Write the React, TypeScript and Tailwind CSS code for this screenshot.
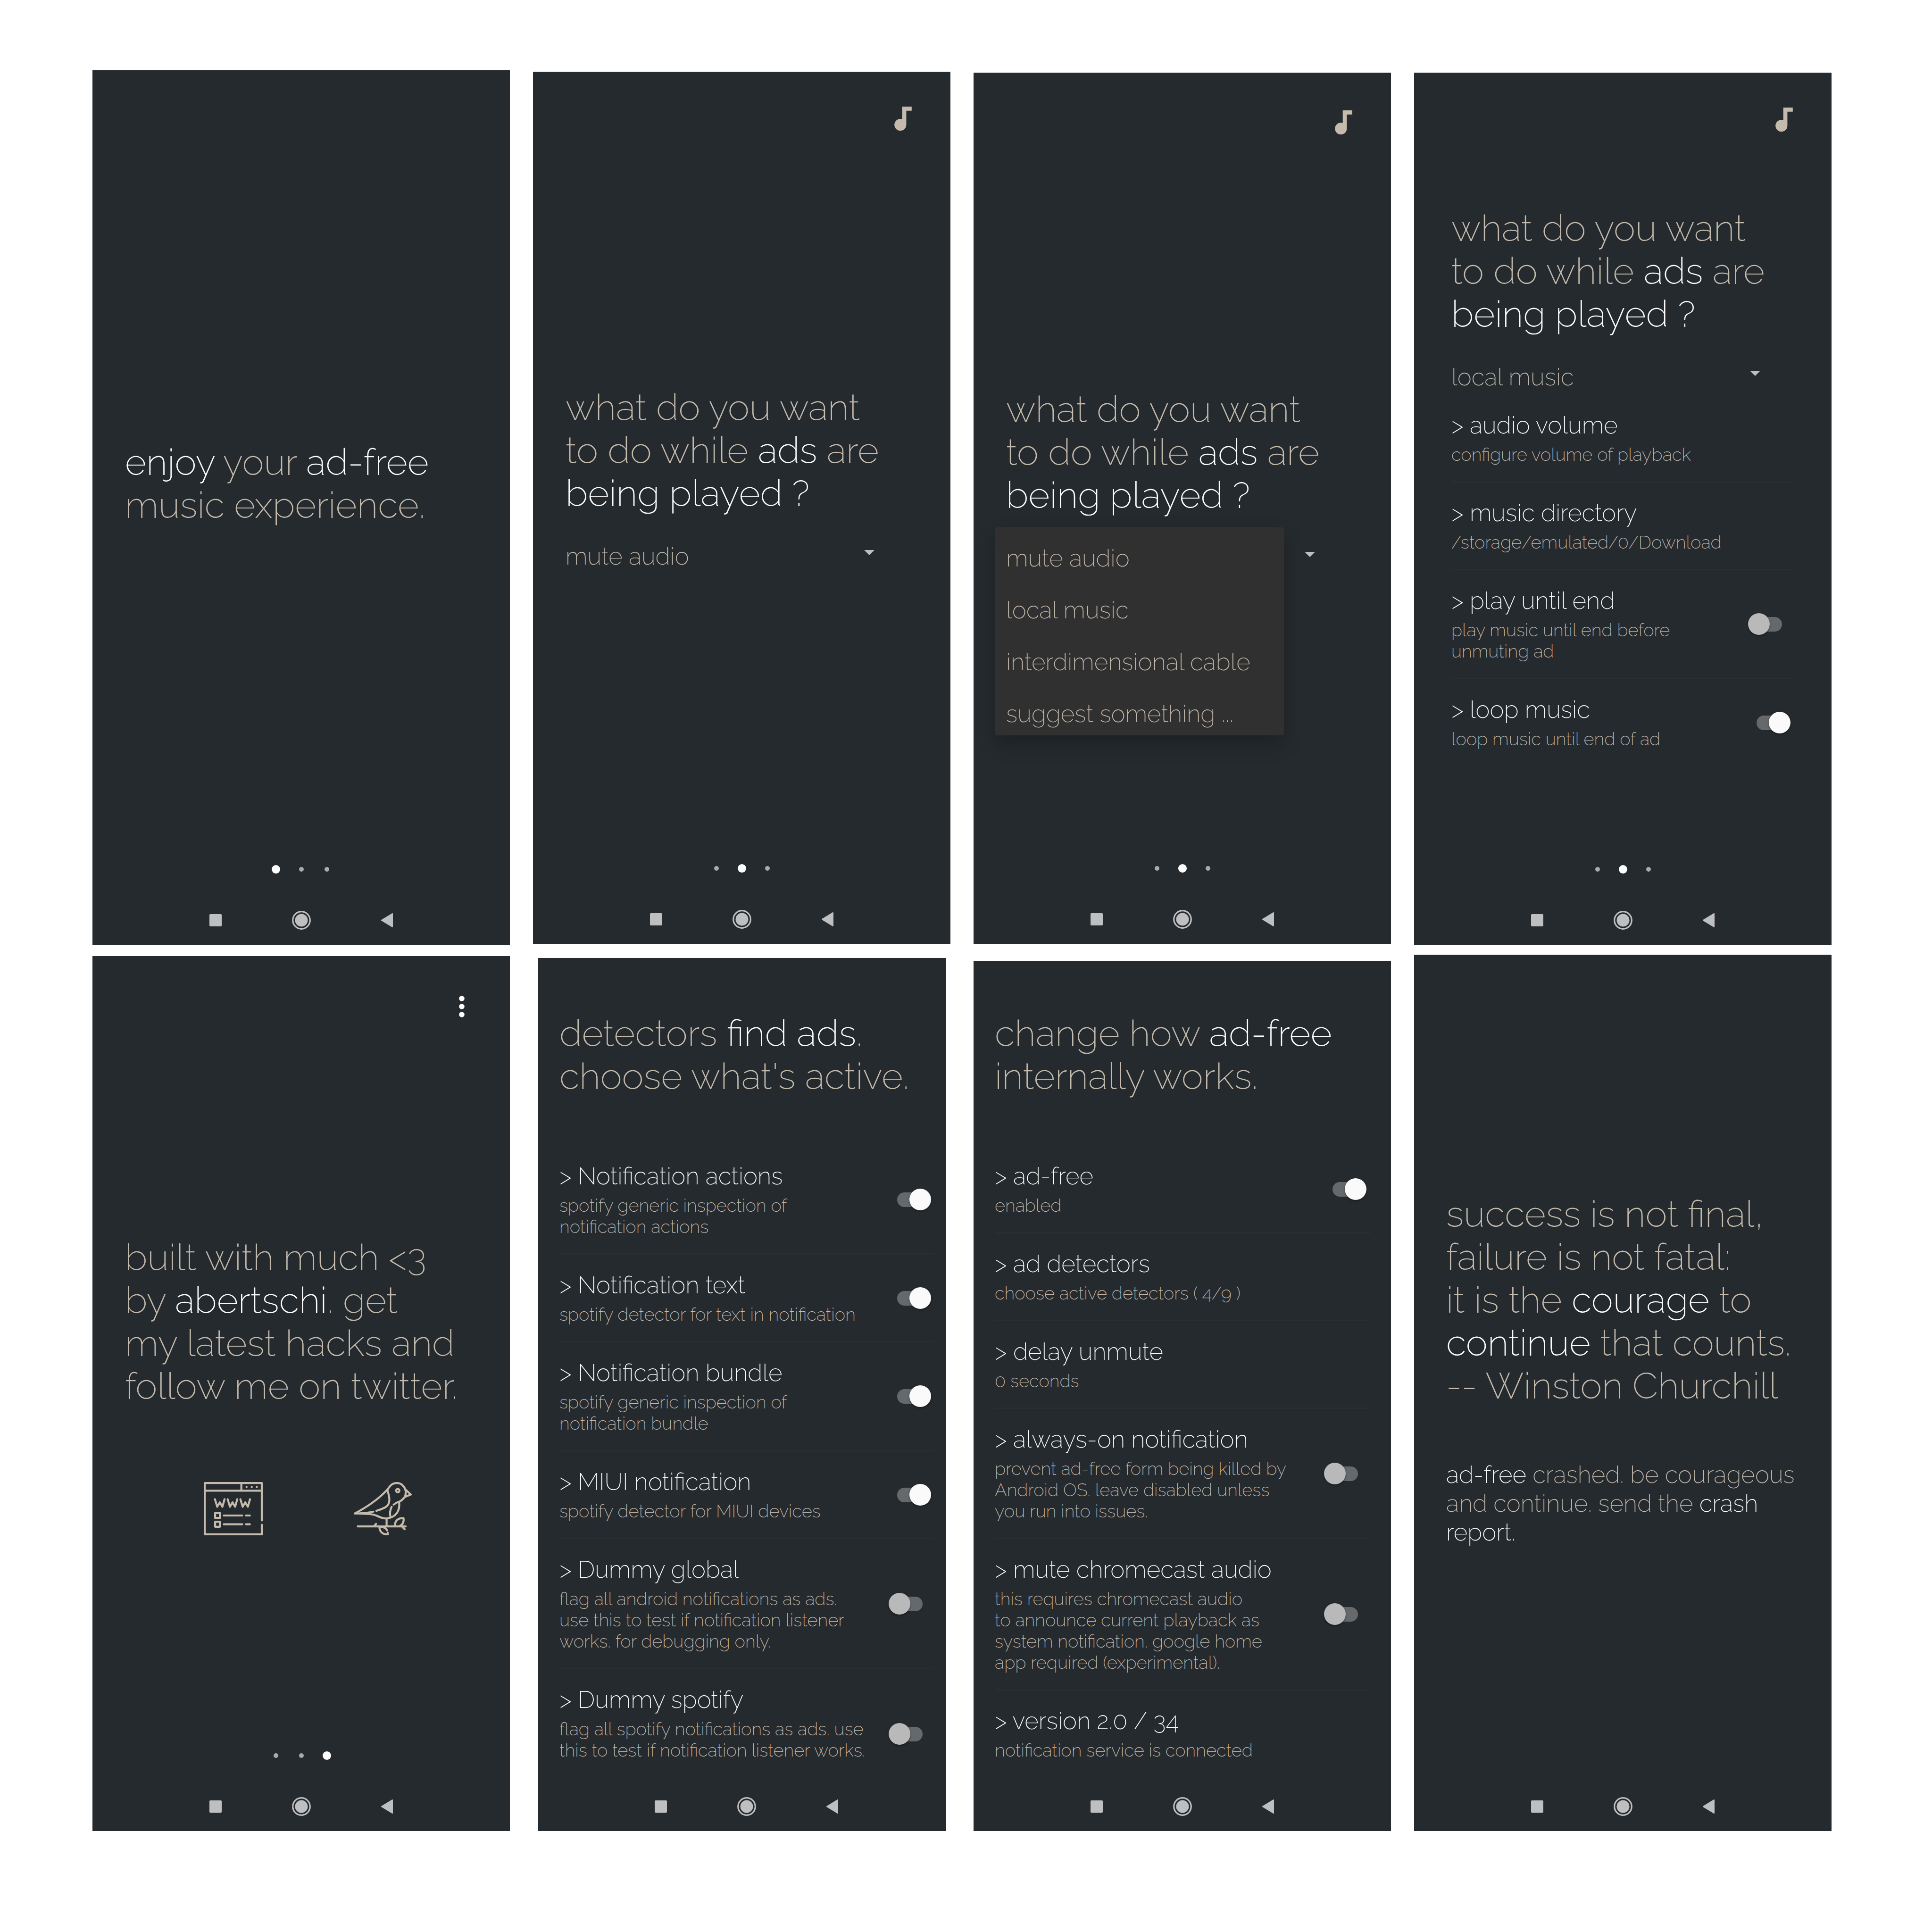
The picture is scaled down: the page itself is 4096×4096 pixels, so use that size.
import React, { type ReactNode } from 'react'

type IconProps = { className?: string }

function NoteIcon({ className }: IconProps) {
  return (
    <svg viewBox="0 0 135 188" className={className} fill="#c5bbad" aria-hidden="true">
      <path d="M61 0h74v32H93v110a46.5 46.5 0 1 1-32-44z" />
    </svg>
  )
}

function MoreIcon({ className }: IconProps) {
  return (
    <svg viewBox="0 0 12 46" className={className} fill="#ffffff" aria-hidden="true">
      <circle cx="6" cy="6" r="5.8" />
      <circle cx="6" cy="23" r="5.8" />
      <circle cx="6" cy="40" r="5.8" />
    </svg>
  )
}

function WebsiteIcon({ className }: IconProps) {
  return (
    <svg viewBox="0 0 125 113" className={className} fill="none" stroke="#c5bbad" strokeWidth="4.2" strokeLinecap="round" strokeLinejoin="round" aria-hidden="true">
      <path d="M123 81.5V2.1H2.1v108.8H123V90.5" />
      <path d="M2.1 18.4H123M79.7 2.1v16.3" />
      <path d="M23.7 36.5 28.5 52.5 34 43l5.5 9.5L44 36.5M50.7 36.5l4.8 16L61 43l5.5 9.5 4.5-16M77.7 36.5l4.8 16L88 43l5.5 9.5 4.5-16" />
      <path d="M24.1 65.6h10.1v10.6H24.1zM24.1 84.2h10.1v10.6H24.1z" />
      <path d="M42.4 71h39.2M89.4 71h8.4M42.4 89.6h39.2M89.4 89.6h8.4" />
      <g fill="#c5bbad" stroke="none">
        <circle cx="90.7" cy="10.4" r="2.2" />
        <circle cx="101.7" cy="10.4" r="2.2" />
        <circle cx="112.4" cy="10.4" r="2.2" />
      </g>
    </svg>
  )
}

function BirdIcon({ className }: IconProps) {
  return (
    <svg viewBox="0 0 123 113" className={className} fill="none" stroke="#c5bbad" strokeWidth="4.2" strokeLinecap="round" strokeLinejoin="round" aria-hidden="true">
      <path d="M2.3 66.6C28 53 52 37 71.3 15.8 77 9 80 2.2 91.3 2.2c9.7 0 16.2 6.8 18.2 14.8 1.5 7 .5 12-2.5 16-3.5 4-7 8-11 8.8-4 1-8 3.2-11.5 6.2" />
      <path d="M95.9 42c2.6 14-2.9 28.5-18.2 33.500-9.700 3.500-17.700 1.500-27.700-3.500-10-4.500-20-5-47.700-5.400 15.700-.1 27.700-.6 39.200-3.800" />
      <path d="M71.3 16.4c1.7 7.6 4.2 13.6 4.2 20.6 0 14-7.5 18-27.5 24" />
      <path d="M80.3 52.7c-3.3 6.3-4.3 13.3-2.6 21.3" />
      <ellipse cx="93.3" cy="18.3" rx="3.5" ry="3.7" />
      <path d="M109.5 15.8 121 26.5 108.5 31.5" />
      <path d="M69.6 78v15M8.4 94.2H110M47.3 88.7 44 92.6M103.6 95.8l4.3 4.2" />
      <path d="M87.5 92.5c-.5-10.5 6.500-16.500 18-15.800 1 7.300-1.500 13.300-7.500 16.300" />
      <path d="M54.4 95.5c.1 9.500 6.600 16 17.600 15.400v-3.200M58 95c7 1 11 3 12.600 7.700" />
    </svg>
  )
}

const White = ({ children }: { children: ReactNode }) => <span className="text-white">{children}</span>

function Heading({ children, className = '' }: { children: ReactNode; className?: string }) {
  return <h2 className={`text-[78px] leading-[91px] whitespace-nowrap ${className}`}>{children}</h2>
}

function PageDots({ active }: { active: number }) {
  return (
    <div className="mb-[79px] flex h-[18px] items-center justify-center gap-9">
      {[0, 1, 2].map((i) => (
        <span key={i} className="flex size-[18px] items-center justify-center">
          <span className={i === active ? 'size-[18px] rounded-full bg-white' : 'size-2.5 rounded-full bg-[#aaaaaa]'} />
        </span>
      ))}
    </div>
  )
}

function NavBar({ className = '' }: { className?: string }) {
  return (
    <nav className={`flex h-10 items-center justify-center gap-[149px] ${className}`} aria-label="System">
      <button type="button" aria-label="Recent apps" className="size-[26px] rounded-[2px] bg-[#bebfc1]" />
      <button type="button" aria-label="Home">
        <svg viewBox="0 0 40 40" className="size-10" aria-hidden="true">
          <circle cx="20" cy="20" r="18.3" fill="none" stroke="#bebfc1" strokeWidth="3.2" />
          <circle cx="20" cy="20" r="13.5" fill="#bebfc1" />
        </svg>
      </button>
      <button type="button" aria-label="Back">
        <svg viewBox="0 0 25 30" className="h-[30px] w-[25px]" aria-hidden="true">
          <path d="M1.2 15 23.8 1.2v27.600z" fill="#bebfc1" stroke="#bebfc1" strokeWidth="2.4" strokeLinejoin="round" />
        </svg>
      </button>
    </nav>
  )
}

function Screen({ children, className = '', dots, navClass = '' }: { children: ReactNode; className?: string; dots?: number; navClass?: string }) {
  return (
    <section className={`relative flex min-w-0 flex-col bg-[#252a2e] pb-8 ${className}`}>
      {children}
      <div className="mt-auto">
        {dots !== undefined && <PageDots active={dots} />}
        <NavBar className={navClass} />
      </div>
    </section>
  )
}

const actions = ['mute audio', 'local music', 'interdimensional cable', 'suggest something ...']

function Caret() {
  return (
    <svg viewBox="0 0 22 11" className="h-[11px] w-[22px]" aria-hidden="true">
      <path d="M0 0h22L11 11z" fill="#bebfc1" />
    </svg>
  )
}

function ActionSelect({ value, id }: { value: string; id: string }) {
  return (
    <div className="relative mt-[53px] w-[655px] max-w-full">
      <label htmlFor={id} className="sr-only">action while ads are played</label>
      <select id={id} defaultValue={value} className="block h-[70px] w-full appearance-none bg-transparent text-[51px] leading-[60px] font-[250] outline-none">
        {actions.map((a) => (
          <option key={a}>{a}</option>
        ))}
      </select>
      <span className="pointer-events-none absolute top-[22px] right-0">
        <Caret />
      </span>
    </div>
  )
}

function ActionMenu() {
  return (
    <>
      <button type="button" aria-haspopup="listbox" aria-expanded="true" aria-label="action while ads are played" className="mt-[53px] flex h-[70px] w-[655px] max-w-full justify-end pt-[22px]">
        <Caret />
      </button>
      <ul role="listbox" aria-label="actions" className="absolute top-[296px] left-[45px] flex w-[613px] flex-col gap-[50px] rounded-[5px] bg-[#303030] pt-[35px] pb-4 pl-6 text-[51px] leading-[60px] font-[250] shadow-[0_18px_40px_rgba(0,0,0,0.22)]">
        {actions.map((a) => (
          <li key={a} role="option" aria-selected={a === 'mute audio'}>{a}</li>
        ))}
      </ul>
    </>
  )
}

function Question() {
  return (
    <Heading>
      what do you want<br />
      to do while <White>ads</White> are<br />
      <White>being played ?</White>
    </Heading>
  )
}

function NoteHeader({ className = '' }: { className?: string }) {
  return (
    <header className={`flex justify-end pr-[82px] ${className}`}>
      <button type="button" aria-label="Music">
        <NoteIcon className="h-[51px] w-[37px]" />
      </button>
    </header>
  )
}

function Toggle({ id, on }: { id: string; on: boolean }) {
  return (
    <input
      id={id}
      type="checkbox"
      role="switch"
      defaultChecked={on}
      className="relative mr-[7px] h-[46px] w-[90px] shrink-0 appearance-none before:absolute before:top-2 before:left-[18px] before:h-[31px] before:w-[54px] before:rounded-full before:bg-[#66696c] after:absolute after:top-0 after:left-0 after:size-[46px] after:rounded-full after:bg-[#b9b9b9] after:shadow-[0_2px_4px_rgba(0,0,0,0.4)] checked:after:left-[44px] checked:after:bg-[#fafafa]"
    />
  )
}

type Row = { title: string; text: string; on?: boolean }

function Rows({ rows, name, className = '' }: { rows: Row[]; name: string; className?: string }) {
  return (
    <ul className={className}>
      {rows.map((r, i) => (
        <li key={r.title} className="flex items-center justify-between border-b-3 border-[#2a2e32] py-[34px] last:border-0 last:pb-0">
          <div className="whitespace-pre font-[250]">
            <label htmlFor={r.on === undefined ? undefined : `${name}-${i}`} className="block text-[51px] leading-[60px] text-white">{`> ${r.title}`}</label>
            <p className="mt-2.5 text-[38px] leading-[45px]">{r.text}</p>
          </div>
          {r.on !== undefined && <Toggle id={`${name}-${i}`} on={r.on} />}
        </li>
      ))}
    </ul>
  )
}

const musicRows: Row[] = [
  { title: 'audio volume', text: 'configure volume of playback' },
  { title: 'music directory', text: '/storage/emulated/0/Download' },
  { title: 'play until end', text: 'play music until end before\nunmuting ad', on: false },
  { title: 'loop music', text: 'loop music until end of ad', on: true },
]

const detectorRows: Row[] = [
  { title: 'Notification actions', text: 'spotify generic inspection of\nnotification actions', on: true },
  { title: 'Notification text', text: 'spotify detector for text in notification', on: true },
  { title: 'Notification bundle', text: 'spotify generic inspection of\nnotification bundle', on: true },
  { title: 'MIUI notification', text: 'spotify detector for MIUI devices', on: true },
  { title: 'Dummy global', text: 'flag all android notifications as ads.\nuse this to test if notification listener\nworks. for debugging only.', on: false },
  { title: 'Dummy spotify', text: 'flag all spotify notifications as ads. use\nthis to test if notification listener works.\n ', on: false },
]

const settingRows: Row[] = [
  { title: 'ad-free', text: 'enabled', on: true },
  { title: 'ad detectors', text: 'choose active detectors ( 4/9 )' },
  { title: 'delay unmute', text: '0 seconds' },
  { title: 'always-on notification', text: 'prevent ad-free form being killed by\nAndroid OS. leave disabled unless\nyou run into issues.', on: false },
  { title: 'mute chromecast audio', text: 'this requires chromecast audio\nto announce current playback as\nsystem notification. google home\napp required (experimental).', on: false },
  { title: 'version 2.0 / 34', text: 'notification service is connected' },
]

export default function App() {
  return (
    <main className="grid min-h-screen grid-cols-4 grid-rows-[1854fr_1858fr] gap-x-[49px] gap-y-[21px] bg-white pt-[149px] pr-[213px] pb-[214px] pl-[196px] font-['Raleway','Inter',sans-serif] font-extralight text-[#c5bbad]">
      <Screen dots={0}>
        <Heading className="mt-[785px] pl-[69px]">
          <White>enjoy</White> your <White>ad-free</White><br />
          music experience.
        </Heading>
      </Screen>

      <Screen dots={1} className="mt-[3px] mb-[2px]">
        <NoteHeader className="pt-[74px]" />
        <div className="mt-[541px] pl-[69px]">
          <Question />
          <ActionSelect id="action-closed" value="mute audio" />
        </div>
      </Screen>

      <Screen dots={1} className="mt-[5px] mb-[2px]">
        <NoteHeader className="pt-[80px]" />
        <div className="relative mt-[537px] pl-[69px]">
          <Question />
          <ActionMenu />
        </div>
      </Screen>

      <Screen dots={1} className="mt-[5px]">
        <NoteHeader className="pt-[74px]" />
        <div className="mt-[159px] pr-20 pl-[79px]">
          <Question />
          <ActionSelect id="action-local" value="local music" />
          <Rows rows={musicRows} name="music" className="mt-[3px]" />
        </div>
      </Screen>

      <Screen dots={2} className="mt-[3px]">
        <header className="flex justify-end pt-[84px] pr-24">
          <button type="button" aria-label="More options">
            <MoreIcon className="h-[46px] w-3" />
          </button>
        </header>
        <Heading className="mt-[463px] pl-[69px]">
          built with much &lt;3<br />
          by <White>abertschi</White>. get<br />
          my latest hacks and<br />
          follow me on twitter.
        </Heading>
        <div className="mt-[158px] flex gap-[193px] pl-[236px]">
          <a href="#website" aria-label="Website"><WebsiteIcon className="h-[113px] w-[125px]" /></a>
          <a href="#twitter" aria-label="Twitter"><BirdIcon className="h-[113px] w-[123px]" /></a>
        </div>
      </Screen>

      <Screen className="mt-[7px] mr-[9px] ml-[11px]" navClass="pl-[18px]">
        <Heading className="mt-[114px] pl-[45px]">
          detectors <White>find ads</White>.<br />
          choose what's active.
        </Heading>
        <Rows rows={detectorRows} name="detector" className="mt-[102px] mr-[25px] ml-[45px]" />
      </Screen>

      <Screen className="mt-[13px]">
        <Heading className="mt-[108px] pl-[45px]">
          change how <White>ad-free</White><br />
          internally works.
        </Heading>
        <Rows rows={settingRows} name="setting" className="mx-[45px] mt-[102px]" />
      </Screen>

      <Screen>
        <Heading className="mt-[504px] pl-[68px]">
          success is not final,<br />
          failure is not fatal:<br />
          it is the <White>courage</White> to<br />
          <White>continue</White> that counts.<br />
          -- Winston Churchill
        </Heading>
        <p className="mt-[113px] pl-[68px] text-[51px] leading-[61px] font-[250] whitespace-nowrap">
          <White>ad-free</White> crashed. be courageous<br />
          and continue. send the <White>crash</White><br />
          <White>report.</White>
        </p>
      </Screen>
    </main>
  )
}
